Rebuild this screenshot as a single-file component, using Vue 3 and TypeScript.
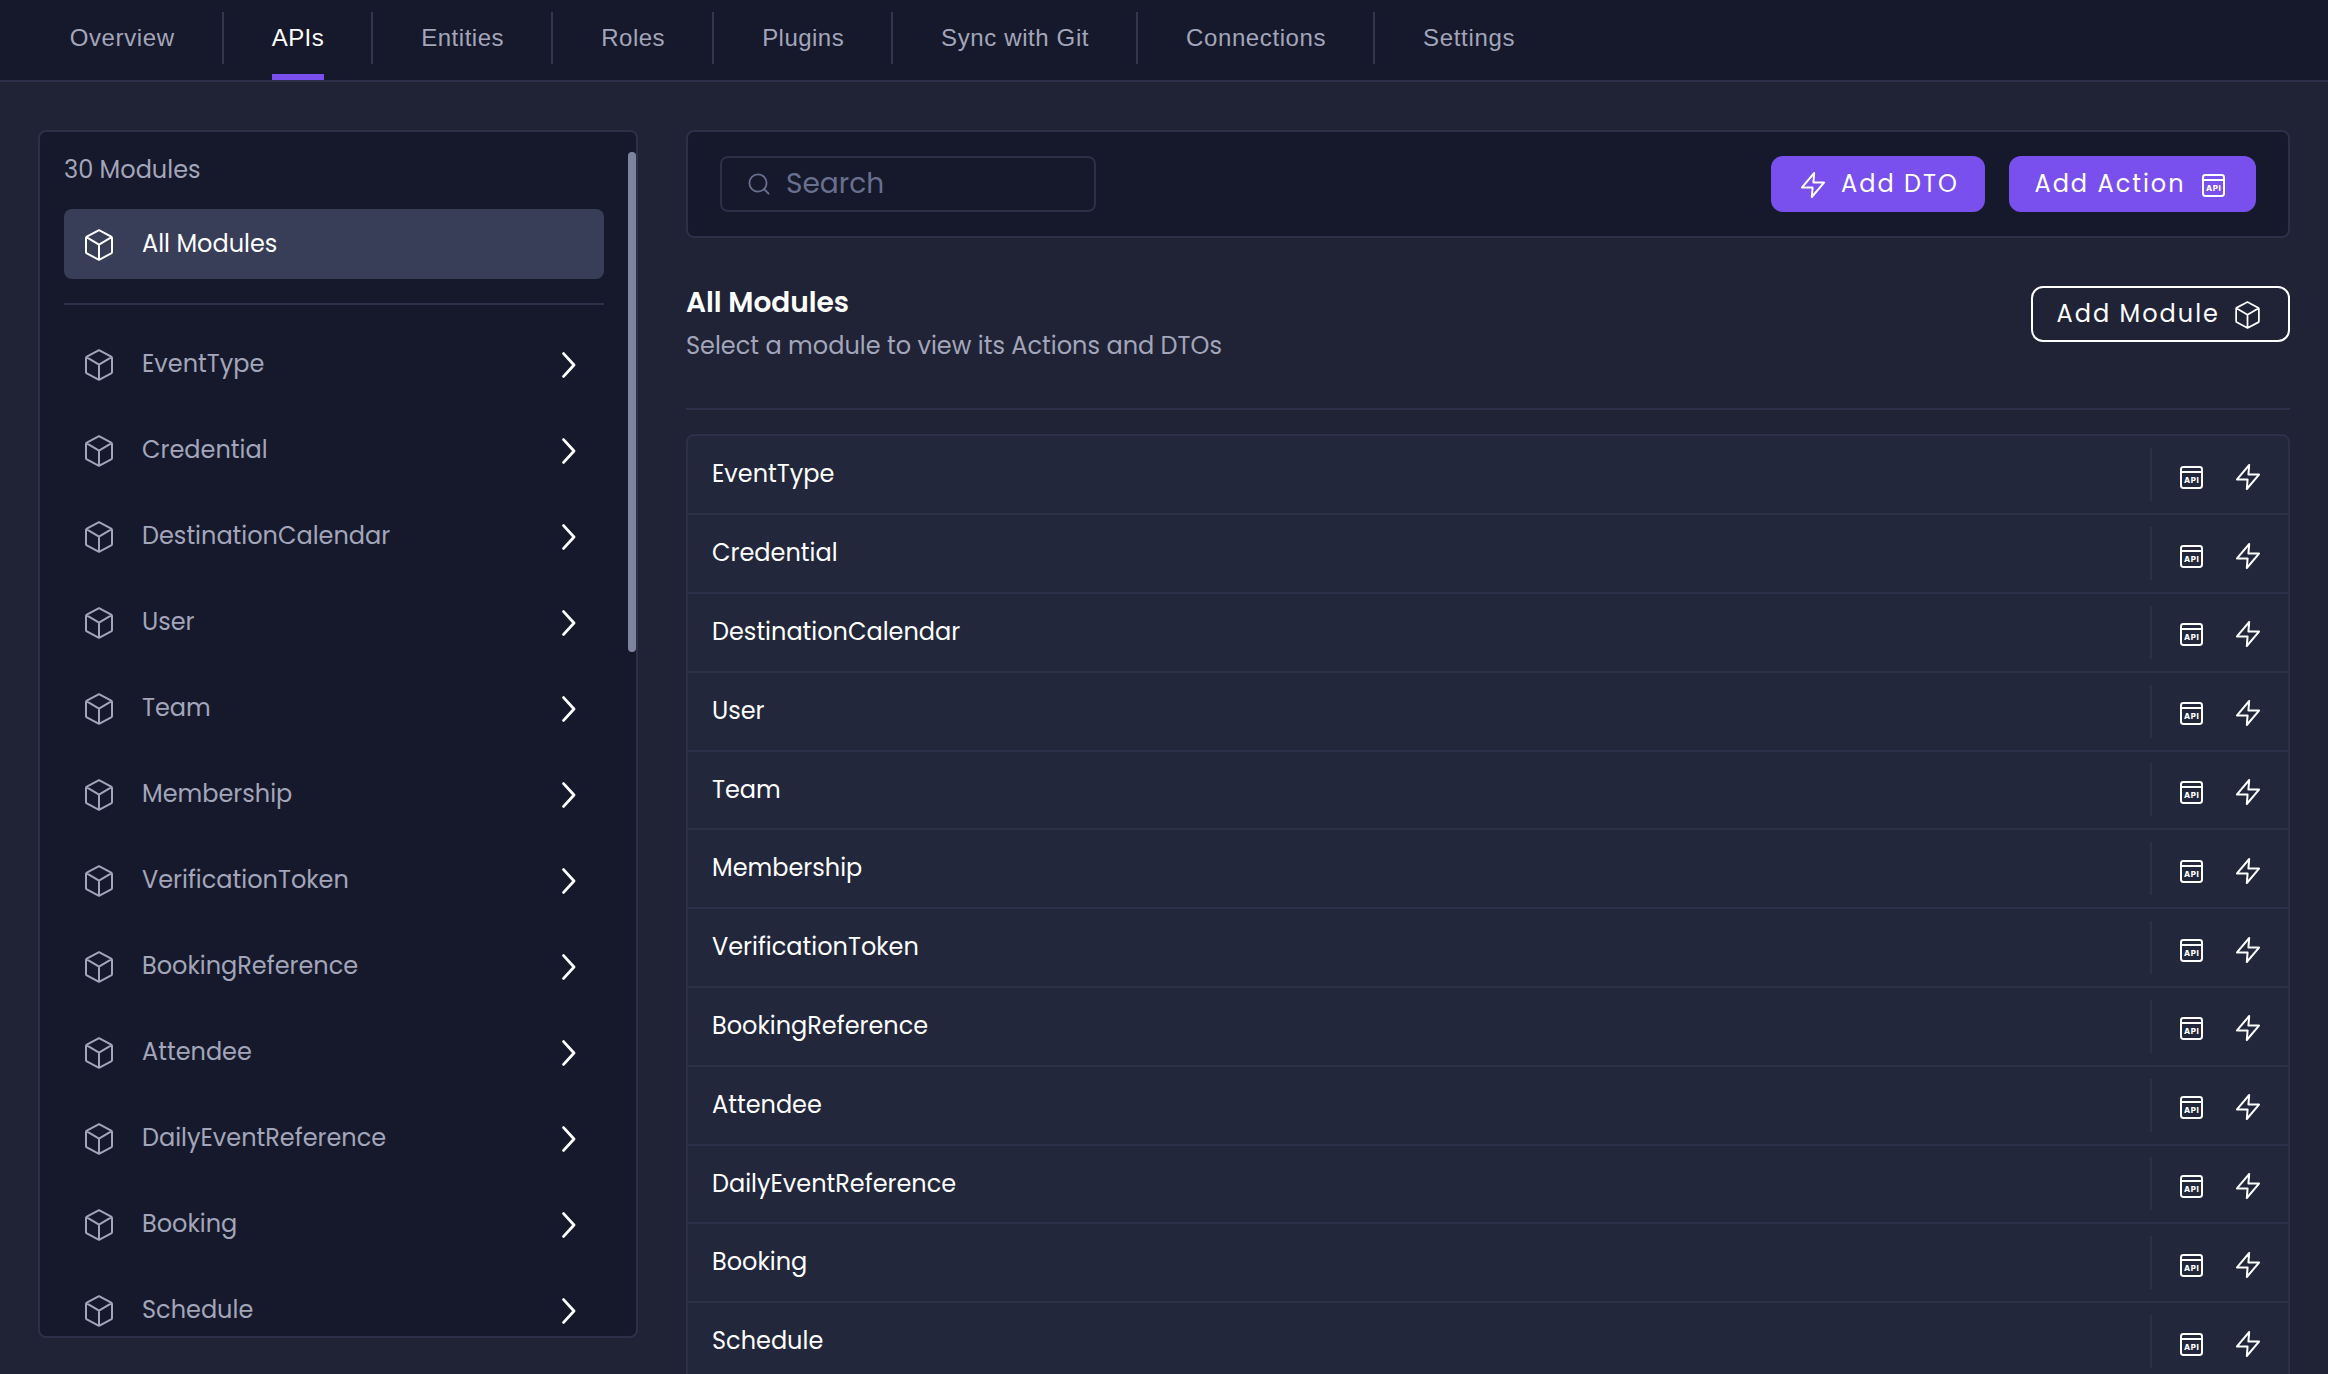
<script setup lang="ts">
interface Tab { text: string; width: number }

const tabs: Tab[] = [
  { text: 'Overview', width: 105 },
  { text: 'APIs', width: 52.5 },
  { text: 'Entities', width: 83 },
  { text: 'Roles', width: 64 },
  { text: 'Plugins', width: 82 },
  { text: 'Sync with Git', width: 148 },
  { text: 'Connections', width: 140 },
  { text: 'Settings', width: 92 },
]

const modules: string[] = [
  'EventType',
  'Credential',
  'DestinationCalendar',
  'User',
  'Team',
  'Membership',
  'VerificationToken',
  'BookingReference',
  'Attendee',
  'DailyEventReference',
  'Booking',
  'Schedule',
]

// Tracks a label out (or in) so its letters span the given width.
const vFit = {
  mounted(el: HTMLElement, binding: { value: number }) {
    const count = (el.textContent ?? '').trim().length
    const natural = el.getBoundingClientRect().width
    el.style.letterSpacing = `${(binding.value - natural) / count}px`
  },
}
</script>

<template>
  <div class="app">
    <svg class="defs" width="0" height="0">
      <symbol id="cube" viewBox="0 0 28 32">
        <path d="M14 1.2 26.2 7.6Q27 8 27 9V23Q27 24 26.2 24.4L14 30.8 1.8 24.4Q1 24 1 23V9Q1 8 1.8 7.6ZM1.4 8.2 14 15.6 26.6 8.2M14 15.6V30.8" />
      </symbol>
      <symbol id="bolt" viewBox="0 0 24 26">
        <path d="M13.2 1 1 15.4H11.6L10.8 25 23 10.6H12.4Z" />
      </symbol>
    </svg>

    <nav class="nav">
      <div v-for="t in tabs" :key="t.text" class="tab" :class="{ active: t.text === 'APIs' }">
        <div class="cell"><span class="box"><span v-fit="t.width">{{ t.text }}</span></span></div>
      </div>
    </nav>

    <div class="body">
      <aside class="side">
        <div class="count">30 Modules</div>
        <div class="item selected">
          <svg class="cube"><use href="#cube" /></svg>
          <span>All Modules</span>
        </div>
        <div class="rule"></div>
        <div v-for="m in modules" :key="m" class="item">
          <svg class="cube"><use href="#cube" /></svg>
          <span>{{ m }}</span>
          <svg class="chev" viewBox="0 0 14 26"><path d="M1.6 1.6 12 13 1.6 24.4" /></svg>
        </div>
        <div class="thumb"></div>
      </aside>

      <main class="main">
        <div class="toolbar">
          <div class="search">
            <svg width="22" height="22" viewBox="0 0 22 22"><circle cx="10" cy="10" r="8.6" /><path d="M16 16 20.6 20.6" /></svg>
            <span>Search</span>
          </div>
          <div class="buttons">
            <button class="btn dto"><svg class="bolt"><use href="#bolt" /></svg><span v-fit="118">Add DTO</span></button>
            <button class="btn action">
              <span v-fit="151">Add Action</span>
              <svg class="api" viewBox="0 0 23 23"><rect x="1" y="1" width="21" height="21" rx="2.4" /><path d="M1 6H22" /><text x="4" y="16.5">API</text></svg>
            </button>
          </div>
        </div>

        <div class="heading">
          <div>
            <h1>All Modules</h1>
            <p>Select a module to view its Actions and DTOs</p>
          </div>
          <button class="btn outline"><span v-fit="163.5">Add Module</span><svg class="cube"><use href="#cube" /></svg></button>
        </div>

        <div class="list">
          <div v-for="m in modules" :key="m" class="row">
            <span>{{ m }}</span>
            <div class="tools">
              <svg class="api" viewBox="0 0 23 23"><rect x="1" y="1" width="21" height="21" rx="2.4" /><path d="M1 6H22" /><text x="4" y="16.5">API</text></svg>
              <svg class="bolt"><use href="#bolt" /></svg>
            </div>
          </div>
        </div>
      </main>
    </div>
  </div>
</template>

<style>
body { background: #202336; overflow: hidden; }
</style>

<style scoped>
.app {
  width: 2328px;
  height: 1374px;
  overflow: hidden;
  background: #202336;
  color: #fff;
  font: 400 24px/36px Poppins, Inter, sans-serif;
}
.defs { position: absolute; }
svg { flex: none; display: block; fill: none; stroke: currentColor; stroke-width: 2; stroke-linejoin: round; stroke-linecap: round; }
svg text { font: 800 8px Inter, sans-serif; fill: currentColor; stroke: none; letter-spacing: 0.6px; }
span { white-space: nowrap; }
.nav {
  display: flex;
  box-sizing: border-box;
  height: 82px;
  padding-left: 22px;
  background: #16192b;
  border-bottom: 2px solid #2c3049;
  font-family: "Liberation Sans", sans-serif;
  color: #a3a6ba;
}
.tab { padding-top: 12px; }
.cell { height: 52px; padding: 0 47.3px 0 47.7px; border-right: 2px solid #32374f; }
.tab:last-child .cell { border-right: 0; }
.box { display: block; box-sizing: border-box; height: 68px; line-height: 52px; }
.active { color: #fff; }
.active .box { border-bottom: 6px solid #7950ed; }
.body { display: flex; gap: 48px; padding: 48px 38px 0; }
.side {
  position: relative;
  box-sizing: border-box;
  width: 600px;
  height: 1208px;
  padding: 20px 32px 0 24px;
  overflow: hidden;
  background: #16192b;
  border: 2px solid #2c3049;
  border-radius: 8px;
}
.count { height: 57px; color: #a3a6ba; }
.item {
  display: flex;
  align-items: center;
  box-sizing: border-box;
  height: 70px;
  margin-bottom: 16px;
  padding: 0 28px 0 21px;
  border-radius: 8px;
  color: #a3a6ba;
}
.item .cube { width: 28px; height: 32px; margin-right: 29px; position: relative; top: 1px; }
.selected { background: #383d58; color: #fff; margin-bottom: 24px; }
.rule { height: 2px; margin-bottom: 24px; background: #2c3049; }
.chev { width: 14px; height: 26px; margin-left: auto; color: #fff; stroke-width: 2.8; position: relative; top: 1px; }
.thumb { position: absolute; right: 0; top: 20px; width: 8px; height: 500px; border-radius: 4px; background: #7f849e; }
.main { width: 1604px; }
.toolbar {
  display: flex;
  align-items: center;
  justify-content: space-between;
  box-sizing: border-box;
  height: 108px;
  padding: 0 32px;
  background: #16192b;
  border: 2px solid #2c3049;
  border-radius: 8px;
}
.search {
  display: flex;
  align-items: center;
  box-sizing: border-box;
  width: 376px;
  height: 56px;
  padding-left: 26px;
  border: 2px solid #2c3049;
  border-radius: 8px;
  color: #696f8f;
  font-size: 28px;
}
.search svg { margin-right: 16px; stroke-width: 1.8; }
.buttons { display: flex; gap: 24px; }
.btn {
  display: flex;
  align-items: center;
  box-sizing: border-box;
  height: 56px;
  margin: 0;
  border: 0;
  border-radius: 12px;
  padding: 0 0 0 26px;
  background: #7950ed;
  color: #fff;
  font: inherit;
}
.bolt { width: 24px; height: 26px; }
.api { width: 23px; height: 23px; }
.dto { width: 214px; padding-left: 30px; }
.dto .bolt { margin-right: 16px; position: relative; top: 1px; }
.action { width: 247px; justify-content: space-between; padding: 0 31px 0 25.5px; }
.action .api { position: relative; top: 1.5px; }
.outline { width: 259px; justify-content: space-between; padding: 0 28px 0 23.5px; background: transparent; border: 2px solid #fff; }
.outline .cube { width: 25px; height: 28px; position: relative; top: 1px; }
.heading {
  display: flex;
  justify-content: space-between;
  box-sizing: border-box;
  height: 172px;
  padding-top: 48px;
  border-bottom: 2px solid #2c3049;
}
h1 { margin: 0; font-size: 28px; font-weight: 600; line-height: 34px; }
p { margin: 8px 0 0; color: #a3a6ba; }
.list { margin-top: 24.4px; border: 2px solid #2c3049; border-radius: 8px; background: #22273b; }
.row {
  display: flex;
  align-items: center;
  justify-content: space-between;
  box-sizing: border-box;
  height: 78.8px;
  padding: 0 28px 0 24px;
  border-bottom: 2px solid #2c3049;
}
.row > span { margin-bottom: 0.9px; }
.tools { display: flex; align-items: center; justify-content: space-between; box-sizing: border-box; width: 110px; height: 53px; padding-left: 28px; border-left: 2px solid #2c3049; }
.tools .api { position: relative; top: 2.6px; }
.tools .bolt { position: relative; top: 2px; }
</style>
